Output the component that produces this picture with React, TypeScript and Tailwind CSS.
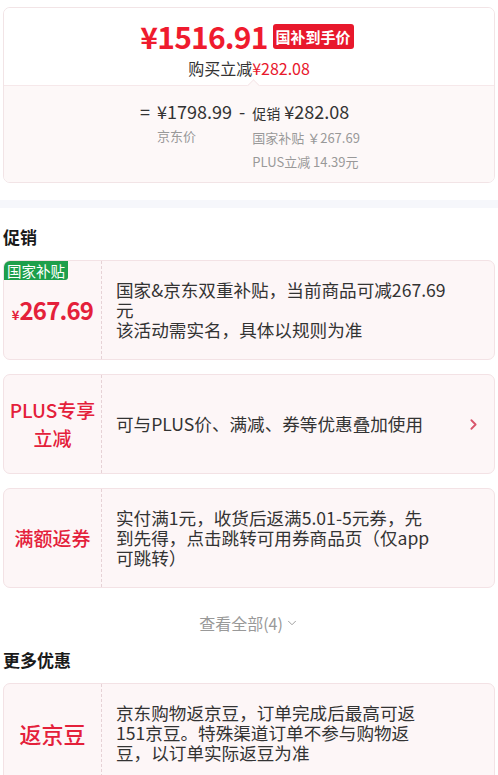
import * as React from "react"
import { ChevronRight, ChevronDown } from "lucide-react"

type Promo = {
    label: React.ReactNode
    text: string
    arrow?: boolean
}

const promos: Promo[] = [
    {
        label: (
            <div className="text-center text-[19px] leading-[28px] font-medium text-[#e4203a]">
                PLUS专享
                <br />
                立减
            </div>
        ),
        text: "可与PLUS价、满减、券等优惠叠加使用",
        arrow: true,
    },
    {
        label: <div className="text-[19px] leading-[26px] font-medium text-[#e4203a]">满额返券</div>,
        text: "实付满1元，收货后返满5.01-5元券，先到先得，点击跳转可用券商品页（仅app可跳转）",
    },
]

function PromoCard({ label, text, arrow, badge, wide }: Promo & { badge?: string; wide?: boolean }) {
    return (
        <div className="mx-[3px] h-[100px] rounded-[7px] border border-[#f3e2e5] bg-[#fdf6f7] flex overflow-hidden">
            <div className="relative w-[98px] shrink-0 border-r border-dashed border-[#e6d2d6] flex items-center justify-center">
                {badge && (
                    <div className="absolute top-0 left-0 h-[19px] px-[3px] bg-[#1d9f4b] text-white text-[14.5px] leading-[19px] rounded-br-[3px]">
                        {badge}
                    </div>
                )}
                {label}
            </div>
            <div className="flex items-center pl-[14px]">
                <p className={`${wide ? "w-[336px]" : "w-[316px]"} whitespace-pre-line text-[17.6px] leading-[20px] text-[#333]`}>{text}</p>
            </div>
            <div className="flex-1 flex items-center justify-end pr-[12px]">
                {arrow && <ChevronRight className="w-[17px] h-[17px] text-[#d9566c]" strokeWidth={2.6} />}
            </div>
        </div>
    )
}

export default function App() {
    return (
        <div className="w-[498px] min-h-[775px] bg-white font-['Noto_Sans_CJK_SC',sans-serif] text-[#333] overflow-hidden">

            {/* Price card */}
            <div className="mx-[3px] mt-[7px] rounded-[7px] border border-[#f2e4e6] overflow-hidden">
                <div className="h-[77px] flex flex-col items-center bg-white pt-[12px]">
                    <div className="flex items-center h-[32px] pr-[4px]">
                        <span className="text-[30px] font-bold text-[#ef1b2e] leading-none tracking-[-0.8px]">¥1516.91</span>
                        <span className="ml-[5px] h-[25px] px-[3px] rounded-[3px] bg-[#e8182c] text-white text-[15px] font-bold leading-[25px]">国补到手价</span>
                    </div>
                    <div className="mt-[6px] text-[16px] leading-[20px] text-[#333]">
                        购买立减<span className="text-[#e8182c]">¥282.08</span>
                    </div>
                </div>
                <div className="relative border-t border-[#f6e8ea] bg-[#fdf8f8] h-[97px] flex justify-center pt-[13px]">
                    <div className="absolute -top-[5px] left-[245px] w-[9px] h-[9px] rotate-45 border-l border-t border-[#f6e8ea] bg-[#fdf8f8]" />
                    <div className="flex text-[#333] pl-[2px]">
                        <span className="text-[18px] leading-[24px] mr-[7px]">=</span>
                        <div className="flex flex-col">
                            <span className="text-[18px] leading-[24px]">¥1798.99</span>
                            <span className="text-[13px] leading-[26px] text-[#999]">京东价</span>
                        </div>
                        <span className="mx-[7px] text-[18px] leading-[24px]">-</span>
                        <div className="flex flex-col">
                            <div className="flex items-baseline leading-[24px]">
                                <span className="text-[14px]">促销</span>
                                <span className="text-[18px] ml-[4px]">¥282.08</span>
                            </div>
                            <span className="text-[13px] leading-[26px] text-[#999]">国家补贴 ￥267.69</span>
                            <span className="text-[13px] leading-[22px] text-[#999]">PLUS立减 14.39元</span>
                        </div>
                    </div>
                </div>
            </div>

            <div className="mt-[17px] h-[8px] bg-[#f6f7fb]" />

            {/* 促销 */}
            <h2 className="mt-[17px] px-[3px] text-[17px] leading-[24px] font-bold text-[#1a1a1a]">促销</h2>
            <div className="mt-[11px] flex flex-col gap-[14px]">
                <PromoCard
                    badge="国家补贴"
                    wide
                    label={
                        <div className="mt-[2px] flex items-baseline text-[#e4203a] font-bold">
                            <span className="text-[13px]">¥</span>
                            <span className="text-[24px] leading-none tracking-[-0.8px]">267.69</span>
                        </div>
                    }
                    text={"国家&京东双重补贴，当前商品可减267.69元\n该活动需实名，具体以规则为准"}
                />
                {promos.map((p, i) => (
                    <PromoCard key={i} {...p} />
                ))}
            </div>

            <div className="mt-[23px] flex items-center justify-center text-[16px] leading-[24px] text-[#999]">
                查看全部(4)
                <ChevronDown className="ml-[2px] w-[14px] h-[14px]" strokeWidth={1.6} />
            </div>

            {/* 更多优惠 */}
            <h2 className="mt-[13px] px-[3px] text-[17px] leading-[24px] font-bold text-[#1a1a1a]">更多优惠</h2>
            <div className="mt-[11px]">
                <PromoCard
                    label={<div className="text-[22px] leading-[28px] font-medium text-[#e4203a]">返京豆</div>}
                    text="京东购物返京豆，订单完成后最高可返151京豆。特殊渠道订单不参与购物返豆，以订单实际返豆为准"
                />
            </div>
        </div>
    )
}
